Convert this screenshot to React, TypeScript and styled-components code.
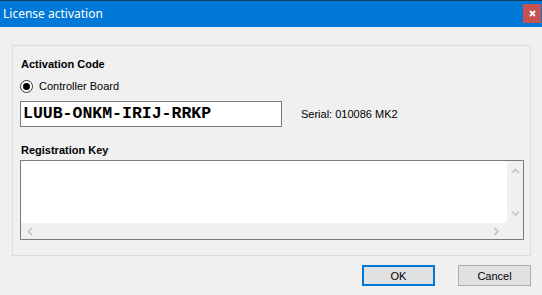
import * as React from "react"
import styled, {createGlobalStyle} from "styled-components"

const GlobalStyle = createGlobalStyle`
  html, body {
    margin: 0;
    padding: 0;
    background: #f0f0f0;
  }
  * {
    box-sizing: border-box;
  }
`

const Chevron = ({dir}: {dir: "up" | "down" | "left" | "right"}) => {
  const paths = {
    up: "M1 5 L4.5 1.5 L8 5",
    down: "M1 1.5 L4.5 5 L8 1.5",
    left: "M5 1 L1.5 4.5 L5 8",
    right: "M1.5 1 L5 4.5 L1.5 8",
  }
  const vertical = dir === "up" || dir === "down"
  return (
    <svg width={vertical ? 9 : 7} height={vertical ? 7 : 9} viewBox={vertical ? "0 0 9 7" : "0 0 7 9"}>
      <path d={paths[dir]} fill="none" stroke="#c2c2c2" strokeWidth="1.6"/>
    </svg>
  )
}

const App = () => {
  return (
    <>
      <GlobalStyle/>
      <Window>
        <TitleBar>
          <Title>License activation</Title>
          <CloseButton>
            <svg width="7" height="7" viewBox="0 0 7 7">
              <path d="M1 1 L6 6 M6 1 L1 6" stroke="#ffffff" strokeWidth="1.8"/>
            </svg>
          </CloseButton>
        </TitleBar>

        <Body>
          <GroupBox>
            <SectionLabel>Activation Code</SectionLabel>
            <RadioRow>
              <Radio><RadioDot/></Radio>
              <Label>Controller Board</Label>
            </RadioRow>
            <CodeRow>
              <CodeInput>LUUB-ONKM-IRIJ-RRKP</CodeInput>
              <Label>Serial: 010086 MK2</Label>
            </CodeRow>
            <SectionLabel $top={17}>Registration Key</SectionLabel>
            <KeyArea>
              <KeyText/>
              <VScroll>
                <Chevron dir="up"/>
                <Chevron dir="down"/>
              </VScroll>
              <HScroll>
                <Chevron dir="left"/>
                <Chevron dir="right"/>
              </HScroll>
              <Corner/>
            </KeyArea>
          </GroupBox>

          <Buttons>
            <Button $primary>OK</Button>
            <Button>Cancel</Button>
          </Buttons>
        </Body>
      </Window>
    </>
  )
}

const Window = styled.div`
  width: 542px;
  height: 295px;
  display: flex;
  flex-direction: column;
  background: #f0f0f0;
  font-family: "Liberation Sans", Arial, sans-serif;
  color: #000;
  overflow: hidden;
`
const TitleBar = styled.div`
  height: 27px;
  flex-shrink: 0;
  background: #0078d7;
  border-top: 1px solid #1a3a5a;
  display: flex;
  align-items: center;
  justify-content: space-between;
  padding: 0 1px 2px 3px;
`
const Title = styled.div`
  font-family: "Noto Sans", "Open Sans", sans-serif;
  font-size: 12px;
  color: #ffffff;
`
const CloseButton = styled.div`
  width: 18px;
  height: 19px;
  background: #c75050;
  display: flex;
  align-items: center;
  justify-content: center;
`
const Body = styled.div`
  flex: 1;
  display: flex;
  flex-direction: column;
  padding: 18px 11px 0 12px;
`
const GroupBox = styled.div`
  height: 211px;
  border: 1px solid #dcdcdc;
  padding: 12px 7px 0 7px;
  display: flex;
  flex-direction: column;
`
const SectionLabel = styled.div<{ $top?: number }>`
  font-size: 11px;
  font-weight: bold;
  line-height: 13px;
  margin-top: ${p => p.$top || 0}px;
  padding-left: 1px;
`
const Label = styled.span`
  font-size: 11px;
  line-height: 13px;
`
const RadioRow = styled.div`
  display: flex;
  align-items: center;
  gap: 6px;
  height: 16px;
  margin-top: 7px;
`
const Radio = styled.div`
  width: 13px;
  height: 13px;
  border-radius: 50%;
  border: 1px solid #333333;
  background: #ffffff;
  display: flex;
  align-items: center;
  justify-content: center;
`
const RadioDot = styled.div`
  width: 7px;
  height: 7px;
  border-radius: 50%;
  background: #000000;
`
const CodeRow = styled.div`
  display: flex;
  align-items: center;
  gap: 19px;
  margin-top: 7px;
`
const CodeInput = styled.div`
  width: 262px;
  height: 26px;
  border: 1px solid #7a7a7a;
  background: #ffffff;
  font-family: "Liberation Mono", "Courier New", monospace;
  font-weight: bold;
  font-size: 16.5px;
  line-height: 24px;
  padding-left: 2px;
`
const KeyArea = styled.div`
  width: 504px;
  height: 80px;
  margin-top: 3px;
  border: 1px solid #7a7a7a;
  display: grid;
  grid-template-columns: 1fr 16px;
  grid-template-rows: 1fr 16px;
`
const KeyText = styled.div`
  background: #ffffff;
`
const VScroll = styled.div`
  background: #f0f0f0;
  display: flex;
  flex-direction: column;
  align-items: center;
  justify-content: space-between;
  padding: 7px 0 6px;
`
const HScroll = styled.div`
  background: #f0f0f0;
  display: flex;
  align-items: center;
  justify-content: space-between;
  padding: 0 7px 0 6px;
`
const Corner = styled.div`
  background: #f0f0f0;
`
const Buttons = styled.div`
  display: flex;
  justify-content: flex-end;
  gap: 23px;
  margin-top: 9px;
`
const Button = styled.div<{ $primary?: boolean }>`
  width: 73px;
  height: 21px;
  background: #e1e1e1;
  border: ${p => p.$primary ? "2px solid #0078d7" : "1px solid #adadad"};
  font-size: 11px;
  display: flex;
  align-items: center;
  justify-content: center;
`

export default App
